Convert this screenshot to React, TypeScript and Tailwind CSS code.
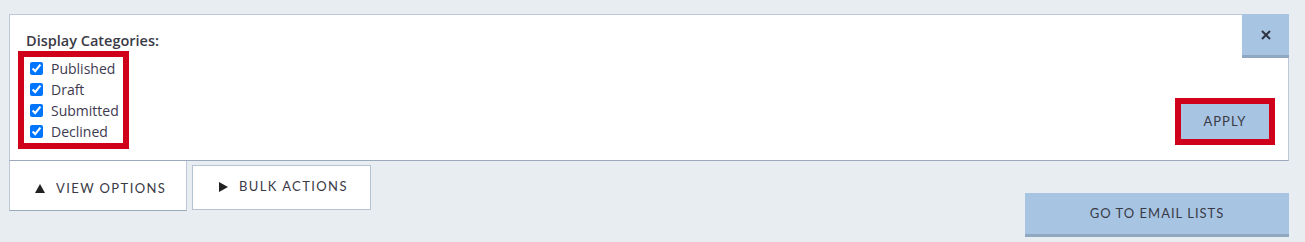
import React from 'react'

const CATEGORIES = ['Published', 'Draft', 'Submitted', 'Declined']

export default function App() {
  return (
    <main className="h-[242px] w-[1305px] bg-[#e8edf2] pt-[14px] pl-[9px] font-['Lato',sans-serif] text-[#3a3a46]">
      {/* OPTIONS PANEL */}
      <div className="relative flex h-[147px] w-[1280px] items-end justify-between border border-b-[#9aa9bb] border-[#bcc8d7] bg-white pr-[13px] pb-[15px] pl-[8px] pt-[16px]">
        <div className="flex h-full flex-col font-['Open_Sans',sans-serif]">
          <p className="pl-[8px] text-[14.5px] font-semibold leading-[19px] text-[#3a3a46]">Display Categories:</p>
          <div className="mt-[1px] w-[111px] border-[6px] border-[#d0021b] pl-[6px] pt-[1px] pb-[1px]">
            {CATEGORIES.map(c => (
              <label key={c} className="flex h-[21px] items-center gap-[8px] text-[14px] text-[#3d3a50]">
                <input type="checkbox" defaultChecked className="m-0 h-[13px] w-[13px] accent-[#0075ff]" />
                <span>{c}</span>
              </label>
            ))}
          </div>
        </div>

        <div className="border-[6px] border-[#d0021b]">
          <button className="flex h-[35px] w-[88px] items-center justify-center bg-[#a7c5e3] text-[13px] tracking-[1px] text-[#3a3a46]">
            APPLY
          </button>
        </div>

        <button className="absolute -top-px -right-px flex h-[44px] w-[47px] items-center justify-center border-b-[3px] border-[#8fa7c1] bg-[#a7c5e3]">
          <svg width="10" height="10" viewBox="0 0 10 10">
            <path d="M1 1L9 9M9 1L1 9" stroke="#2f3340" strokeWidth="2" />
          </svg>
        </button>
      </div>

      {/* TABS */}
      <div className="-mt-px flex w-[1280px] items-start justify-between">
        <div className="flex items-start">
          <div className="flex h-[51px] w-[178px] items-center gap-[11px] border-x border-b border-x-[#bcc8d7] border-b-[#9aa9bb] bg-white pl-[25px] pt-[7px] text-[13px] tracking-[1.4px] text-[#3a3a46]">
            <svg width="10" height="9" viewBox="0 0 10 9">
              <path d="M5 0L10 9H0Z" fill="#222" />
            </svg>
            <span>VIEW OPTIONS</span>
          </div>
          <div className="ml-[5px] mt-[5px] flex h-[45px] w-[179px] items-center gap-[11px] border border-[#b5c2d2] bg-white pb-[2px] pl-[26px] text-[13px] tracking-[1.4px] text-[#3a3a46]">
            <svg width="9" height="10" viewBox="0 0 9 10">
              <path d="M0 0L9 5L0 10Z" fill="#222" />
            </svg>
            <span>BULK ACTIONS</span>
          </div>
        </div>
        <button className="mt-[33px] flex h-[44px] w-[264px] items-center justify-center border-b-[3px] border-[#8fa7c1] bg-[#a7c5e3] text-[13px] tracking-[1px] text-[#3a3a46]">
          GO TO EMAIL LISTS
        </button>
      </div>
    </main>
  )
}
